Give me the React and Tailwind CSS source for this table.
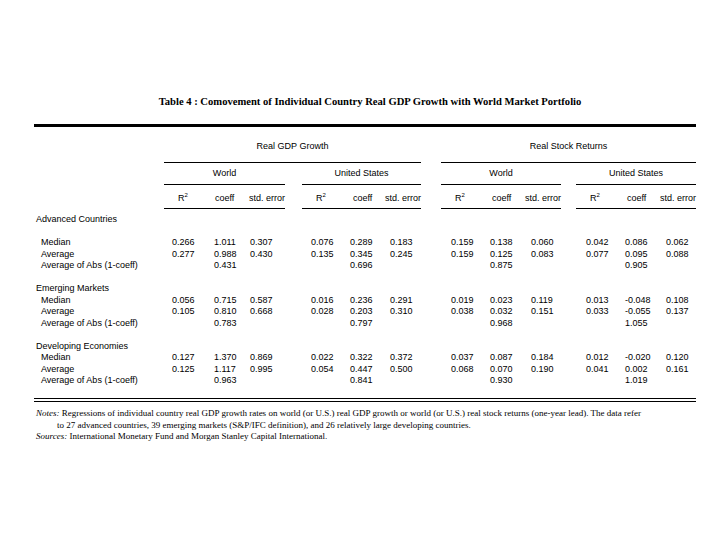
import React from "react";

const sections = [
  {
    title: "Advanced Countries",
    blank: true,
    rows: [
      ["Median", ["0.266", "1.011", "0.307", "0.076", "0.289", "0.183", "0.159", "0.138", "0.060", "0.042", "0.086", "0.062"]],
      ["Average", ["0.277", "0.988", "0.430", "0.135", "0.345", "0.245", "0.159", "0.125", "0.083", "0.077", "0.095", "0.088"]],
      ["Average of Abs (1-coeff)", ["", "0.431", "", "", "0.696", "", "", "0.875", "", "", "0.905", ""]],
    ],
  },
  {
    title: "Emerging Markets",
    blank: false,
    rows: [
      ["Median", ["0.056", "0.715", "0.587", "0.016", "0.236", "0.291", "0.019", "0.023", "0.119", "0.013", "-0.048", "0.108"]],
      ["Average", ["0.105", "0.810", "0.668", "0.028", "0.203", "0.310", "0.038", "0.032", "0.151", "0.033", "-0.055", "0.137"]],
      ["Average of Abs (1-coeff)", ["", "0.783", "", "", "0.797", "", "", "0.968", "", "", "1.055", ""]],
    ],
  },
  {
    title: "Developing Economies",
    blank: false,
    rows: [
      ["Median", ["0.127", "1.370", "0.869", "0.022", "0.322", "0.372", "0.037", "0.087", "0.184", "0.012", "-0.020", "0.120"]],
      ["Average", ["0.125", "1.117", "0.995", "0.054", "0.447", "0.500", "0.068", "0.070", "0.190", "0.041", "0.002", "0.161"]],
      ["Average of Abs (1-coeff)", ["", "0.963", "", "", "0.841", "", "", "0.930", "", "", "1.019", ""]],
    ],
  },
];

// widths of the 12 data columns (left edge to next left edge)
const cols = [
  "w-[42px]", "w-[36px]", "w-[61px]", "w-[39px]", "w-[40px]", "w-[61px]",
  "w-[39px]", "w-[41px]", "w-[55px]", "w-[39px]", "w-[41px]", "w-[30px]",
];

function SubGroup({ name, width }) {
  return (
    <div className={width}>
      <div className="pt-[4px] pb-[5px] leading-[12px] text-center border-b border-black">{name}</div>
      <div className="flex pt-[7px] pb-[4px] leading-[12px] border-b border-black">
        <span className="w-[51px] pl-[14px]">
          R<span className="inline-block text-[6px] leading-[6px] align-baseline relative top-[-4px]">2</span>
        </span>
        <span>coeff</span>
        <span className="ml-auto">std. error</span>
      </div>
    </div>
  );
}

function Group({ title, width, subs }) {
  return (
    <div className={width}>
      <div className="pt-[13px] pb-[10px] leading-[12px] text-center border-b border-black">{title}</div>
      <div className="flex justify-between">
        {subs.map(([name, w]) => (
          <SubGroup key={name} name={name} width={w} />
        ))}
      </div>
    </div>
  );
}

function Row({ label, values, indent }) {
  return (
    <div className="flex h-[11.5px] leading-[11.5px]">
      <div className={indent ? "w-[138px] pl-[7px]" : "w-[138px] pl-[2px]"}>{label}</div>
      {values &&
        values.map((v, i) => (
          <div key={i} className={cols[i]}>
            {v}
          </div>
        ))}
    </div>
  );
}

export default function App() {
  return (
    <div className="w-[720px] h-[540px] bg-white text-black overflow-hidden">
      {/* Title */}
      <div className="pt-[95px] pl-[20px] h-[109px] leading-[14px] text-center font-bold text-[10.6px] font-['Liberation_Serif',serif]">
        Table 4 : Comovement of Individual Country Real GDP Growth with World Market Portfolio
      </div>
      <div className="ml-[34px] w-[662px] mt-[15px] h-[3px] bg-black" />

      <div className="font-['Liberation_Sans',Arial,sans-serif] text-[9px]">
        {/* Header */}
        <div className="flex ml-[34px]">
          <div className="w-[130px]" />
          <div className="flex gap-[20px]">
            <Group
              title="Real GDP Growth"
              width="w-[257px]"
              subs={[["World", "w-[121px]"], ["United States", "w-[119px]"]]}
            />
            <Group
              title="Real Stock Returns"
              width="w-[255px]"
              subs={[["World", "w-[120px]"], ["United States", "w-[120px]"]]}
            />
          </div>
        </div>

        {/* Body */}
        <div className="ml-[34px] w-[662px] mt-[5px]">
          {sections.map((s, si) => (
            <div key={s.title}>
              <Row label={s.title} />
              {s.blank && <div className="h-[11.5px]" />}
              {s.rows.map(([label, vals]) => (
                <Row key={label} label={label} values={vals} indent />
              ))}
              {si < sections.length - 1 && <div className="h-[11.5px]" />}
            </div>
          ))}
          <div className="mt-[11.5px] h-[4px] border-y border-black" />
        </div>
      </div>

      {/* Notes */}
      <div className="ml-[36px] mt-[6px] text-[9px] leading-[11.5px] font-['Liberation_Serif',serif]">
        <div>
          <i>Notes:</i> Regressions of individual country real GDP growth rates on world (or U.S.) real GDP growth or world (or U.S.) real stock returns (one-year lead). The data refer
        </div>
        <div className="pl-[21px]">
          to 27 advanced countries, 39 emerging markets (S&amp;P/IFC definition), and 26 relatively large developing countries.
        </div>
        <div>
          <i>Sources:</i> International Monetary Fund and Morgan Stanley Capital International.
        </div>
      </div>
    </div>
  );
}
